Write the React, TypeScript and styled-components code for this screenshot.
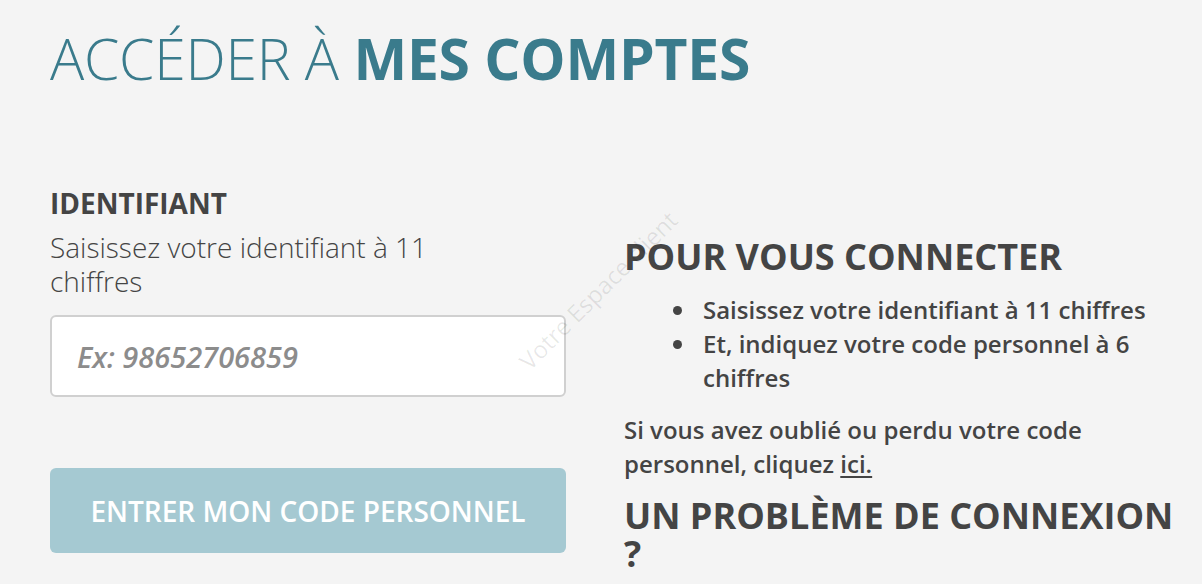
import React from "react";
import styled, { createGlobalStyle } from "styled-components";

const Global = createGlobalStyle`
  html, body { margin: 0; padding: 0; background: #f4f4f4; }
  body { font-family: "Open Sans", "Noto Sans", sans-serif; color: #444; }
  * { box-sizing: border-box; }
`;

const Page = styled.div`
  position: relative;
  width: 1202px;
  height: 584px;
  overflow: hidden;
  padding: 19px 0 0 50px;
`;

const Title = styled.h1`
  margin: 0;
  font-size: 57px;
  line-height: 78px;
  font-weight: 300;
  color: #3a7b8c;
  letter-spacing: -0.25px;
  white-space: nowrap;
  strong { font-weight: 700; }
`;

const Columns = styled.div`
  display: flex;
  gap: 58px;
  margin-top: 89px;
`;

const Left = styled.div`
  width: 516px;
  flex: none;
  display: flex;
  flex-direction: column;
`;

const Label = styled.div`
  font-size: 28px;
  font-weight: 700;
  line-height: 34px;
  color: #444;
`;

const Help = styled.p`
  margin: 10px 0 0;
  font-size: 28px;
  line-height: 34px;
  font-weight: 300;
  color: #444;
  max-width: 440px;
`;

const Input = styled.input`
  margin-top: 17px;
  height: 82px;
  width: 516px;
  border: 2px solid #d0d0d0;
  border-radius: 6px;
  background: #fff;
  padding: 0 25px;
  font-family: inherit;
  font-size: 29px;
  font-style: italic;
  font-weight: 600;
  color: #444;
  outline: none;
  &::placeholder { color: #8c8c8c; }
`;

const Button = styled.button`
  margin-top: 71px;
  height: 85px;
  width: 516px;
  border: none;
  border-radius: 6px;
  background: #a5c9d2;
  color: #fff;
  font-family: inherit;
  font-size: 28px;
  font-weight: 600;
  padding: 0;
`;

const Right = styled.div`
  flex: 1;
  padding-top: 52px;
  padding-right: 18px;
`;

const Heading = styled.h2<{ $top?: number }>`
  margin: ${(p) => p.$top ?? 0}px 0 0;
  font-size: 36px;
  line-height: 38px;
  font-weight: 700;
  color: #444;
`;

const List = styled.ul`
  margin: 17px 0 0;
  padding-left: 73px;
  font-size: 24px;
  line-height: 34px;
  font-weight: 600;
  color: #444;
`;

const Item = styled.li`
  padding-left: 6px;
`;

const Para = styled.p`
  margin: 18px 0 0;
  font-size: 24px;
  line-height: 34px;
  font-weight: 600;
  color: #444;
  a { color: #444; text-decoration: underline; text-underline-offset: 3px; }
`;

const Watermark = styled.div`
  position: absolute;
  left: 598px;
  top: 290px;
  transform: translate(-50%, -50%) rotate(-45deg);
  font-size: 24px;
  font-weight: 400;
  color: rgba(0, 0, 0, 0.09);
  white-space: nowrap;
  pointer-events: none;
  z-index: 2;
`;

export default function App() {
  return (
    <>
      <Global />
      <Page>
        <Title>
          ACCÉDER À <strong>MES COMPTES</strong>
        </Title>
        <Columns>
          <Left>
            <Label>IDENTIFIANT</Label>
            <Help>Saisissez votre identifiant à 11 chiffres</Help>
            <Input placeholder="Ex: 98652706859" />
            <Button>ENTRER MON CODE PERSONNEL</Button>
          </Left>
          <Right>
            <Heading>POUR VOUS CONNECTER</Heading>
            <List>
              <Item>Saisissez votre identifiant à 11 chiffres</Item>
              <Item>Et, indiquez votre code personnel à 6 chiffres</Item>
            </List>
            <Para>
              Si vous avez oublié ou perdu votre code personnel, cliquez <a href="#">ici.</a>
            </Para>
            <Heading $top={16}>UN PROBLÈME DE CONNEXION ?</Heading>
          </Right>
        </Columns>
        <Watermark>Votre Espace client</Watermark>
      </Page>
    </>
  );
}
